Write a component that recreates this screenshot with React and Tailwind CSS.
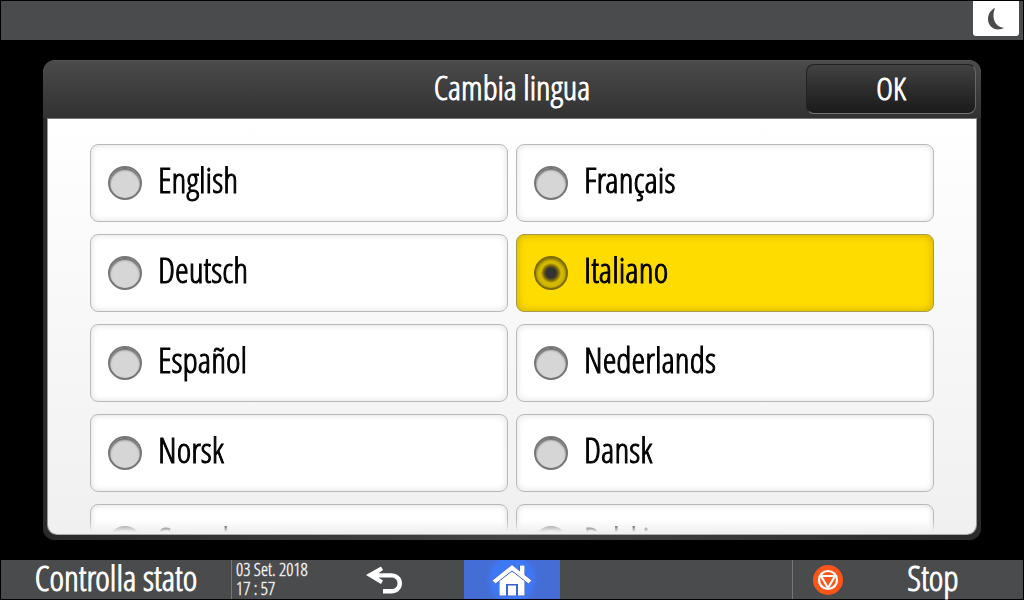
import { useState } from 'react';

const languages = [
  'English',
  'Français',
  'Deutsch',
  'Italiano',
  'Español',
  'Nederlands',
  'Norsk',
  'Dansk',
  'Svenska',
  'Polski',
];

function MoonIcon() {
  return (
    <svg width="18" height="24" viewBox="0 0 18 24" aria-hidden="true">
      <path d="M8 1C3.500 3 1 7.500 1 12C1 18 5.500 22.500 11 22.500C13.500 22.500 15.500 22 17 20.800C11 20.500 6.800 15.500 6.500 9.500C6.400 6 7 3.500 8 1Z" fill="#4a4b4d" />
    </svg>
  );
}

function BackIcon() {
  return (
    <svg width="36" height="28" viewBox="0 0 36 28" aria-hidden="true">
      <path d="M0 9L15 0.500L17 4L12.500 7.200H25C31 7.200 36 11 36 17.200C36 23.500 31 27.500 25.500 27.500H17V23H25.500C29 23 31.500 20.800 31.500 17.200C31.500 13.500 28.500 11.500 25 11.500H12.500L17 14.500L15 18Z" fill="#fff" />
    </svg>
  );
}

function HomeIcon() {
  return (
    <svg width="40" height="32" viewBox="0 0 40 32" aria-hidden="true">
      <g fill="#fff" stroke="#2c55b0" strokeWidth="1" paintOrder="stroke">
        <path d="M7.500 17L20 7.500L32.500 17V31.500H26V20H14V31.500H7.500Z" />
        <path d="M16 21.500H24V31.500H16Z" />
        <path d="M20 1L28 7.500V1.500H32.500V11L39.500 16.500L36.500 19.500L20 6.500L3.500 19.500L0.500 16.500Z" />
      </g>
    </svg>
  );
}

function StopIcon() {
  return (
    <svg width="30" height="30" viewBox="0 0 30 30" aria-hidden="true">
      <circle cx="15" cy="15" r="15" fill="#fb5518" />
      <circle cx="15" cy="15" r="9" fill="none" stroke="#fff" strokeWidth="2.200" />
      <path d="M8 11H22L15 23Z" fill="none" stroke="#fff" strokeWidth="2.200" strokeLinejoin="round" />
    </svg>
  );
}

function LanguageOption({ name, checked, onSelect }) {
  return (
    <label
      className={`flex h-[78px] items-center gap-4 rounded-lg border px-[17px] text-[35px] leading-9 text-black [-webkit-text-stroke:1px] ${
        checked
          ? 'border-[#a89b4a] bg-[#ffdc00] shadow-[inset_0_0_8px_#c9a900]'
          : 'border-[#b9b9b9] bg-white shadow-[inset_0_0_6px_#dcdcdc]'
      }`}
    >
      <input
        type="radio"
        name="language"
        value={name}
        checked={checked}
        onChange={() => onSelect(name)}
        className="size-[34px] shrink-0 appearance-none rounded-full border-2 border-[#777] bg-[#d6d6d6] shadow-[inset_0_2px_2px_#666] checked:border-[#7d6b00] checked:bg-[radial-gradient(circle,#333_0_5px,#8a7600_8px,#d4b900_10px)] checked:shadow-[inset_0_1px_3px_#6b5b00]"
      />
      <span className="pb-[6px]">{name}</span>
    </label>
  );
}

export default function App() {
  const [language, setLanguage] = useState('Italiano');

  return (
    <div className="flex h-screen flex-col bg-black p-px font-['Open_Sans_Condensed_Light','Liberation_Sans_Narrow','Noto_Sans',sans-serif] text-white">
      <header className="flex h-[39px] shrink-0 items-start justify-end bg-[#4a4b4d] pr-1">
        <button type="button" aria-label="Sospensione" className="flex h-[35px] w-[46px] items-center justify-center rounded-b-[3px] bg-white">
          <MoonIcon />
        </button>
      </header>

      <main className="flex min-h-0 flex-1 flex-col px-[42px] py-5">
        <section className="flex min-h-0 flex-1 flex-col overflow-hidden rounded-xl bg-[#333]">
          <div className="grid h-[58px] shrink-0 grid-cols-[1fr_auto_1fr] items-center border-t border-[#555] bg-linear-to-b from-[#4a4a4a] to-[#323232] px-[5px] pb-0.5">
            <h1 className="col-start-2 pb-1 text-[34px] leading-9 [-webkit-text-stroke:1px] [text-shadow:0_-1px_1px_#111]">Cambia lingua</h1>
            <button type="button" className="h-[50px] w-[170px] justify-self-end rounded-lg border border-t-[#222] border-r-[#666] border-b-[#777] border-l-[#222] bg-linear-to-b from-[#424242] to-[#1a1a1a] pb-0.5 text-[32px] leading-9 [-webkit-text-stroke:1px]">
              OK
            </button>
          </div>
          <div className="flex min-h-0 flex-1 flex-col bg-linear-to-r from-[#2a2a2a] via-[#444] to-[#2a2a2a] px-1 pb-[5px]">
            <div className="min-h-0 flex-1 overflow-hidden rounded-b-[10px] border border-t-[#777] border-r-[#999] border-b-[#aaa] border-l-[#999] bg-linear-to-b from-white to-[#f0f0f0]">
              <div className="grid h-full auto-rows-max grid-cols-2 gap-x-2 gap-y-3 overflow-y-auto px-[42px] pt-[25px] [mask-image:linear-gradient(to_top,transparent_2px,#000_14px)] [scrollbar-width:none]">
                {languages.map((name) => (
                  <LanguageOption key={name} name={name} checked={name === language} onSelect={setLanguage} />
                ))}
              </div>
            </div>
          </div>
        </section>
      </main>

      <footer className="flex h-[39px] shrink-0 items-stretch bg-[#4a4b4d]">
        <div className="flex flex-1">
          <button type="button" className="w-[231px] border-r border-[#777] pb-1 text-[35px] leading-9 [-webkit-text-stroke:1px]">Controlla stato</button>
          <div className="flex flex-col justify-center pb-0.5 pl-1 text-[18px] leading-[19px] [-webkit-text-stroke:1px_#ffffff60]">
            <span>03 Set. 2018</span>
            <span>17 : 57</span>
          </div>
          <button type="button" aria-label="Indietro" className="mr-8 ml-auto flex w-24 items-center justify-center">
            <BackIcon />
          </button>
        </div>
        <button type="button" aria-label="Home" className="flex w-24 items-center justify-center bg-[radial-gradient(circle,#3f78f5_20px,#456dd6_26px)]">
          <HomeIcon />
        </button>
        <div className="flex flex-1 justify-end">
          <button type="button" className="flex w-[231px] items-center border-l border-[#777] pl-5 text-[35px] leading-9 [-webkit-text-stroke:1px]">
            <StopIcon />
            <span className="flex-1 pb-1">Stop</span>
          </button>
        </div>
      </footer>
    </div>
  );
}
